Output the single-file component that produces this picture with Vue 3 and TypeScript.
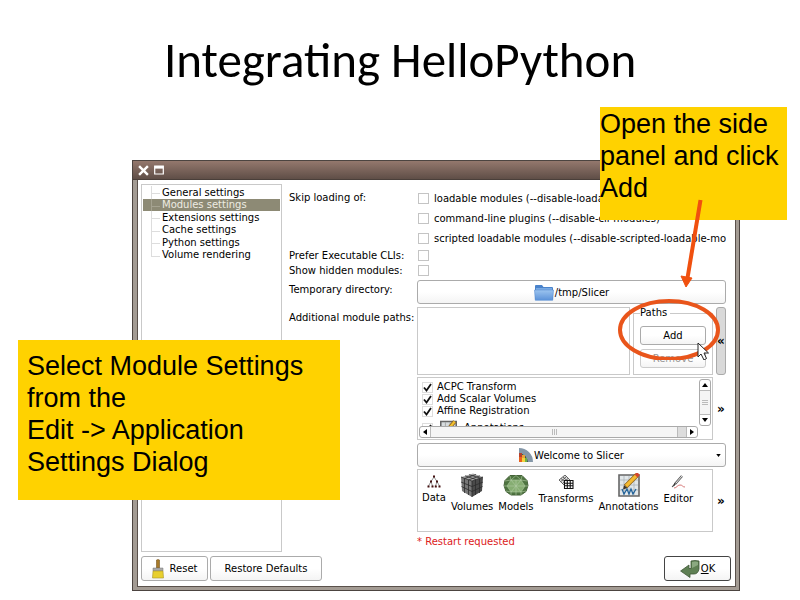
<script setup lang="ts">
import { ref } from 'vue'

const sections = ['General settings', 'Modules settings', 'Extensions settings', 'Cache settings', 'Python settings', 'Volume rendering']
const current = ref('Modules settings')

const skips = [
  { id: 'skip-loadable', label: 'loadable modules (--disable-loadable-modules)' },
  { id: 'skip-cli', label: 'command-line plugins (--disable-cli-modules)' },
  { id: 'skip-scripted', label: 'scripted loadable modules (--disable-scripted-loadable-mo' },
]

const modules = ['ACPC Transform', 'Add Scalar Volumes', 'Affine Registration']
</script>

<template>
  <main class="slide">
    <h1 class="title">Integrating HelloPython</h1>

    <section class="dialog" aria-label="Application settings">
      <header class="titlebar">
        <button class="win" aria-label="Close">
          <svg viewBox="0 0 10 10" width="11" height="11"><path d="M1 1L9 9M9 1L1 9" stroke="#fff" stroke-width="2.2" /></svg>
        </button>
        <button class="win" aria-label="Maximize">
          <svg viewBox="0 0 10 10" width="10" height="10"><path d="M.7 1h8.6v8H.7z" fill="none" stroke="#fff" stroke-width="1.2" /><path d="M.5 1h9v2.6h-9z" fill="#fff" /></svg>
        </button>
      </header>

      <div class="content">
        <div class="panes">
          <nav class="tree">
            <button v-for="s in sections" :key="s" class="node" :class="{ active: s === current }" @click="current = s">{{ s }}</button>
          </nav>

          <form class="form" @submit.prevent>
            <span class="label skip-label">Skip loading of:</span>
            <div class="skips">
              <div v-for="s in skips" :key="s.id" class="check">
                <input :id="s.id" type="checkbox" class="box" />
                <label :for="s.id">{{ s.label }}</label>
              </div>
            </div>

            <label class="label" for="prefer">Prefer Executable CLIs:</label>
            <div class="check slim"><input id="prefer" type="checkbox" class="box" /></div>
            <label class="label" for="hidden">Show hidden modules:</label>
            <div class="check slim"><input id="hidden" type="checkbox" class="box" /></div>

            <label class="label temp" for="tmpdir">Temporary directory:</label>
            <button id="tmpdir" type="button" class="btn wide">
              <svg viewBox="0 0 20 17" width="20" height="17">
                <defs><linearGradient id="fold" x1="0" y1="0" x2="0" y2="1"><stop offset="0" stop-color="#9cc4ef" /><stop offset="1" stop-color="#5c92d9" /></linearGradient></defs>
                <path d="M1 15.500V2q0-1 1-1h6l1.500 2H18q1 0 1 1v11.500z" fill="#4a83cb" />
                <path d="M2 4h16v2H2z" fill="#78aae4" />
                <path d="M.5 6h19l-.8 10.300H1.300z" fill="url(#fold)" stroke="#5b8fd2" stroke-width=".6" />
              </svg>
              <span>/tmp/Slicer</span>
            </button>

            <span class="label paths-label">Additional module paths:</span>
            <div class="paths">
              <div class="pathlist"></div>
              <fieldset class="group">
                <legend>Paths</legend>
                <button type="button" class="btn small">Add</button>
                <button type="button" class="btn small" disabled>Remove</button>
              </fieldset>
              <button type="button" class="expander open">«</button>
            </div>

            <div class="row2 listrow">
              <div class="modlist">
                <div class="modmain">
                  <ul class="mods">
                    <li v-for="m in modules" :key="m">
                      <label class="mod"><input type="checkbox" checked class="box tick" /><span>{{ m }}</span></label>
                    </li>
                    <li>
                      <label class="mod tall">
                        <input type="checkbox" checked class="box tick" />
                        <svg viewBox="0 0 22 22" width="17" height="17"><path d="M1 2h20v19H1z" fill="#d7dcde" stroke="#666" stroke-width="2" /><path d="M7 3v17M13 3v17M1 9h19" stroke="#999" /><path d="M8 15L19 2" stroke="#8b5d17" stroke-width="5" /><path d="M8 15L19 2" stroke="#f0c030" stroke-width="3" /></svg>
                        <span>Annotations</span>
                      </label>
                    </li>
                  </ul>
                  <div class="vbar">
                    <button type="button" class="arrow" aria-label="Scroll up"><svg viewBox="0 0 6 4" width="6" height="4"><path d="M0 4L3 0L6 4z" /></svg></button>
                    <div class="vthumb"><i></i><i></i><i></i></div>
                    <button type="button" class="arrow" aria-label="Scroll down"><svg viewBox="0 0 6 4" width="6" height="4"><path d="M0 0L3 4L6 0z" /></svg></button>
                  </div>
                </div>
                <div class="hbar">
                  <button type="button" class="arrow" aria-label="Scroll left"><svg viewBox="0 0 4 6" width="4" height="6"><path d="M4 0L0 3L4 6z" /></svg></button>
                  <div class="hthumb"><i></i><i></i><i></i></div>
                  <div class="htrack"></div>
                  <button type="button" class="arrow" aria-label="Scroll right"><svg viewBox="0 0 4 6" width="4" height="6"><path d="M0 0L4 3L0 6z" /></svg></button>
                </div>
              </div>
              <button type="button" class="expander">»</button>
            </div>

            <button type="button" class="btn wide row2 home">
              <svg viewBox="0 0 14 14" width="14" height="14">
                <path d="M0 0a14 14 0 0 1 14 14H9A9 9 0 0 0 0 5z" fill="#8497a8" />
                <path d="M0 5a9 9 0 0 1 9 9H0z" fill="#3e5b46" />
                <path d="M0 5h3v4H0z" fill="#b5402e" /><path d="M3 7h3v3H3z" fill="#e8a23a" /><path d="M0 9h3v5H0z" fill="#e8601c" /><path d="M3 10h3v4H3z" fill="#f4d23c" /><path d="M6 10h2v4H6z" fill="#6fb046" />
              </svg>
              <span>Welcome to Slicer</span>
              <svg class="caret" viewBox="0 0 6 4" width="5" height="3"><path d="M0 0L3 4L6 0z" /></svg>
            </button>

            <div class="row2 favrow">
              <div class="favs">
                <button type="button" class="fav compact">
                  <svg viewBox="0 0 14 13" width="14" height="13"><path d="M7 2L4 6.500L1.500 11M7 2L10 6.500L12.500 11M4 6.500L5.500 11M10 6.500L8.500 11" stroke="#777" fill="none" stroke-width=".8" /><path d="M6 0.500h2v2H6zM3 5.500h2v2H3zM9 5.500h2v2H9zM.5 10.500h2v2h-2zM4.500 10.500h2v2h-2zM7.800 10.500h2v2h-2zM11.500 10.500h2v2h-2z" fill="#411" /></svg>
                  <span>Data</span>
                </button>
                <button type="button" class="fav">
                  <svg viewBox="0 0 24 24" width="24" height="24"><path d="M1 4L13 .5L23 4L12 8z" fill="#aaa" /><path d="M1 4L12 8V24L2 18z" fill="#777" /><path d="M12 8L23 4L22 18L12 24z" fill="#4a4a4a" /><path d="M5 2.800L16 6.500M9 1.700L20 5M4.500 5.500L16 1.500M8.500 7L20 2.800M4.500 5.500V20M8.500 7V22M15.500 7V22M19.500 5.500V20M1 9L12 13.500L23 9M1.500 13.500L12 18.500L22.500 13.500M1 4L12 8L23 4M12 8V24" stroke="#2c2c2c" stroke-width=".8" fill="none" /></svg>
                  <span>Volumes</span>
                </button>
                <button type="button" class="fav">
                  <svg viewBox="0 0 26 24" width="26" height="24"><path d="M7 2.500h12l5 5 1 5-2 6-5 3.500H8l-5-3.500-2-6 1-5z" fill="#4f7541" stroke="#456339" /><path d="M8 7h10l4 6-4 6H8l-4-6z" fill="#86ad72" /><path d="M8 7L7 3M8 7L2 8M4 13H1M8 19L3 18M8 19V22M18 19V22M18 19L23 18M22 13H25M18 7L24 8M18 7L19 3M8 7L13 2.500L18 7M8 7L13 13L18 7L22 13L18 19L13 13L8 19L4 13L8 7H18M4 13H22M8 19H18M13 7V22" stroke="#b2cda4" stroke-width=".6" fill="none" /></svg>
                  <span>Models</span>
                </button>
                <button type="button" class="fav compact">
                  <svg viewBox="0 0 15 14" width="15" height="14"><path d="M0 5L6 0L11 5L5 10zM2 3.500L7.500 8.500M4 2L9 6.500M1.700 6.700L7.500 1.500M3.500 8.500L9 3.500" stroke="#444" stroke-width=".8" fill="#ddd" /><path d="M5.500 5.500h8.500v8H5.500z" fill="#fff" /><path d="M5.500 5.500h8.500v8H5.500zM8.300 5.500v8M11.200 5.500v8M5.500 8.200H14M5.500 10.800H14" stroke="#111" stroke-width="1.100" fill="none" /></svg>
                  <span>Transforms</span>
                </button>
                <button type="button" class="fav">
                  <svg viewBox="0 0 22 24" width="22" height="24"><path d="M1 2h20v21H1z" fill="#e2e7e9" stroke="#666" stroke-width="1.600" /><path d="M6 3v19M11 3v19M16 3v19M2 7h18M2 12h18M2 17h18" stroke="#abb4b9" stroke-width=".8" /><path d="M4 16l2 5 3-5 2 5 2-5 2 5 3-5" fill="none" stroke="#23639a" stroke-width="1.300" /><path d="M7.500 13.500L19 2" stroke="#8b5d17" stroke-width="4.600" /><path d="M8 13L19 2" stroke="#f4ba31" stroke-width="3.200" /><path d="M18 3L20.500 .5" stroke="#d3462f" stroke-width="4" /><path d="M5 16.500l1-4.200L9.500 15z" fill="#3a3226" /></svg>
                  <span>Annotations</span>
                </button>
                <button type="button" class="fav compact">
                  <svg viewBox="0 0 14 14" width="14" height="14"><path d="M11 1L4 9" stroke="#555" stroke-width="2.400" /><path d="M11 1L4.500 8.500" stroke="#eee" stroke-width="1" /><path d="M1 12l3-4v2z" stroke="#333" fill="#333" stroke-width=".6" /><path d="M3 13c3 0 3-3 6-3s2 2 5 2" stroke="#c55" fill="none" stroke-width=".8" /></svg>
                  <span>Editor</span>
                </button>
              </div>
              <button type="button" class="expander">»</button>
            </div>

            <p class="row2 notice">* Restart requested</p>
          </form>
        </div>

        <footer class="actions">
          <button class="btn action">
            <svg viewBox="0 0 12 20" width="12" height="20"><path d="M4.500 1q1.500-1 3 0v8h-3z" fill="#a77a2a" stroke="#77561e" stroke-width=".6" /><path d="M1 9h10v3H1z" fill="#aaa" stroke="#777" stroke-width=".5" /><path d="M1 12h10l.5 7H.5z" fill="#e8cf2e" stroke="#a6932a" stroke-width=".6" /></svg>
            <span>Reset</span>
          </button>
          <button class="btn action restore">Restore Defaults</button>
          <button class="btn action ok">
            <svg viewBox="0 0 20 18" width="20" height="18"><path d="M11 1q4-1 8 0v8q-1 5-5 5h-4v3.500L.6 11L9 5v3.500h2z" fill="#5f8054" stroke="#3d5536" stroke-width=".8" /><path d="M12 2q3-.8 6 0v3l-6 3z" fill="#8ba981" /></svg>
            <span><u>O</u>K</span>
          </button>
        </footer>
      </div>

      <aside class="note note-add">Open the side panel and click Add</aside>
      <svg class="marks" viewBox="0 0 120 180" width="120" height="180" aria-hidden="true">
        <path d="M84.500 20L71.500 98" stroke="#f0500f" stroke-width="4" />
        <path d="M65 96L76 98L70 107z" fill="#f0500f" stroke="#f0500f" />
        <ellipse cx="53" cy="150" rx="49" ry="29" fill="none" stroke="#e9551b" stroke-width="4" />
        <path d="M82 163v14l3-3 3 6 2.500-1.500-2.500-5.500h4.500z" fill="#fff" stroke="#222" />
      </svg>
    </section>

    <aside class="note note-select">Select Module Settings from the<br />Edit -&gt; Application Settings Dialog</aside>
  </main>
</template>

<style>
body {
  margin: 0;
  background: #fff;
}
</style>

<style scoped>
* {
  box-sizing: border-box;
}
.slide {
  position: relative;
  overflow: hidden;
  padding: 30px 60px 10px 132px;
  color: #000;
  font-family: 'DejaVu Sans', sans-serif;
  font-size: 10px;
}
.title {
  height: 130px;
  margin: 0 0 0 -72px;
  font: 400 49px/60px Carlito, Lato, sans-serif;
  text-align: center;
}
button {
  margin: 0;
  padding: 0;
  border: 0;
  background: none;
  color: inherit;
  font: inherit;
}
svg {
  display: block;
  flex: none;
}
.dialog {
  position: relative;
  padding: 0 3px 3px 4px;
  border: 1px solid #4c4440;
  background: #a39b93;
}
.titlebar {
  display: flex;
  gap: 5px;
  align-items: center;
  height: 19px;
  margin: 0 -3px 0 -4px;
  padding: 0 5px;
  border-bottom: 1px solid #4a3f3a;
  background: linear-gradient(#94786d, #5f4e47);
}
.content {
  padding: 4px 4px 5px 3px;
  border: 1px solid #5a514b;
  border-top: 0;
  background: #fff;
}
.panes {
  display: flex;
  gap: 7px;
}
.tree {
  flex: none;
  display: flex;
  flex-direction: column;
  width: 141px;
  padding: 1px;
  border: 1px solid #c9c9c9;
}
.node {
  position: relative;
  height: 13px;
  padding-left: 19px;
  text-align: left;
  line-height: 12px;
  white-space: nowrap;
}
.node:nth-child(even) {
  height: 12px;
}
.node::before {
  content: '';
  position: absolute;
  left: 8px;
  top: 0;
  width: 8px;
  height: 7px;
  border-left: 1px solid #ddd;
  border-bottom: 1px solid #ddd;
}
.node:not(:last-child)::after {
  content: '';
  position: absolute;
  left: 8px;
  top: 7px;
  bottom: 0;
  border-left: 1px solid #ddd;
}
.active {
  background: #8d8a75;
  color: #eeece2;
}
.active::before,
.active:not(:last-child)::after {
  border-color: #a5a290;
}
.form {
  flex: 1;
  min-width: 0;
  display: grid;
  grid-template-columns: 128px minmax(0, 1fr);
  align-content: start;
  padding: 4px 5px 3px 0;
}
.label {
  line-height: 15px;
  white-space: nowrap;
}
.skip-label {
  line-height: 20px;
}
.check {
  display: flex;
  align-items: center;
  gap: 5px;
  height: 20px;
  padding-left: 1px;
  overflow: hidden;
  white-space: nowrap;
}
.slim {
  height: 15px;
}
.box {
  flex: none;
  appearance: none;
  width: 11px;
  height: 11px;
  margin: 0;
  border: 1px solid #c4c4c4;
  background: #fff;
}
.btn {
  display: flex;
  align-items: center;
  justify-content: center;
  border: 1px solid #ababab;
  border-radius: 3px;
  background: linear-gradient(#fff 50%, #f4f4f4);
  white-space: nowrap;
}
.wide {
  height: 24px;
  gap: 1px;
}
.temp {
  line-height: 20px;
}
#tmpdir,
.temp {
  margin-top: 2px;
}
.paths-label {
  padding-top: 6px;
}
.paths {
  display: flex;
  gap: 3px;
  height: 68px;
  margin-top: 3px;
}
.pathlist {
  flex: 1;
  border: 1px solid #c9c9c9;
}
.group {
  display: flex;
  flex-direction: column;
  gap: 4px;
  width: 80px;
  margin: 0;
  padding: 7px 6px 0;
  border: 1px solid #c9c9c9;
}
.group legend {
  height: 12px;
  padding: 0 3px 0 0;
  line-height: 12px;
}
.small {
  height: 19px;
}
.small:disabled {
  border-color: #ccc;
  color: #999;
}
.expander {
  flex: none;
  width: 10px;
  font-size: 12px;
  font-weight: bold;
}
.open {
  border: 1px solid #aaa;
  border-radius: 3px;
  background: #d9d9d9;
}
.row2 {
  grid-column: 2;
}
.listrow,
.favrow {
  display: flex;
  gap: 3px;
  height: 63px;
  margin-top: 2px;
}
.modlist {
  flex: 1;
  min-width: 0;
  display: flex;
  flex-direction: column;
  padding: 1px;
  border: 1px solid #c9c9c9;
}
.modmain {
  flex: 1;
  min-height: 0;
  display: flex;
}
.mods {
  flex: 1;
  height: 47px;
  margin: 0;
  padding: 2px 0 0 3px;
  overflow: hidden;
  list-style: none;
}
.mod {
  display: flex;
  align-items: center;
  gap: 4px;
  height: 12px;
  line-height: 12px;
}
.tall {
  gap: 7px;
  height: 22px;
}
.tick {
  border-color: #ddd;
  background: no-repeat center / 9px 9px url("data:image/svg+xml,%3Csvg xmlns='http://www.w3.org/2000/svg' viewBox='0 0 9 9'%3E%3Cpath d='M1 4.500L3.500 7.500L8 1' fill='none' stroke='%23111' stroke-width='1.800'/%3E%3C/svg%3E");
}
.vbar {
  display: flex;
  flex-direction: column;
  width: 12px;
  height: 47px;
  border: 1px solid #aaa;
  border-radius: 3px;
}
.arrow {
  flex: none;
  display: flex;
  align-items: center;
  justify-content: center;
  width: 10px;
  height: 10px;
}
.vthumb,
.hthumb {
  flex: 1;
  display: flex;
  align-items: center;
  justify-content: center;
  gap: 1px;
  border: 0 solid #bbb;
  background: #f5f5f5;
}
.vthumb {
  flex-direction: column;
  border-width: 1px 0;
}
.vthumb i {
  width: 6px;
  border-top: 1px solid #bbb;
}
.hthumb {
  border-width: 0 1px;
}
.hthumb i {
  height: 6px;
  border-left: 1px solid #bbb;
}
.hbar {
  display: flex;
  width: calc(100% - 13px);
  height: 12px;
  border: 1px solid #aaa;
  border-radius: 3px;
}
.htrack {
  width: 9px;
  border-right: 1px solid #bbb;
  background: #ddd;
}
.home {
  position: relative;
  margin-top: 3px;
}
.caret {
  position: absolute;
  right: 4px;
  top: 10px;
}
.favs {
  flex: 1;
  min-width: 0;
  display: flex;
  align-items: flex-start;
  gap: 5px;
  padding: 3px 4px;
  border: 1px solid #c9c9c9;
}
.fav {
  display: flex;
  flex-direction: column;
  align-items: center;
  gap: 4px;
  line-height: 12px;
}
.compact {
  padding-top: 2px;
}
.notice {
  margin: 2px 0 0;
  color: #dc2020;
  line-height: 15px;
}
.actions {
  display: flex;
  gap: 2px;
  margin-top: 4px;
}
.action {
  gap: 6px;
  width: 67px;
  height: 25px;
}
.restore {
  width: 112px;
}
.ok {
  gap: 1px;
  margin-left: auto;
  border-color: #444;
}
.note {
  position: absolute;
  background: #ffd200;
  font: 27px/32px 'Liberation Sans', Arial, sans-serif;
}
.note-add {
  top: -54px;
  right: -48px;
  width: 187px;
  height: 113px;
  padding-top: 1px;
}
.note-select {
  top: 340px;
  left: 18px;
  width: 322px;
  height: 160px;
  padding: 10px 9px;
}
.marks {
  position: absolute;
  top: 19px;
  right: 3px;
}
</style>
